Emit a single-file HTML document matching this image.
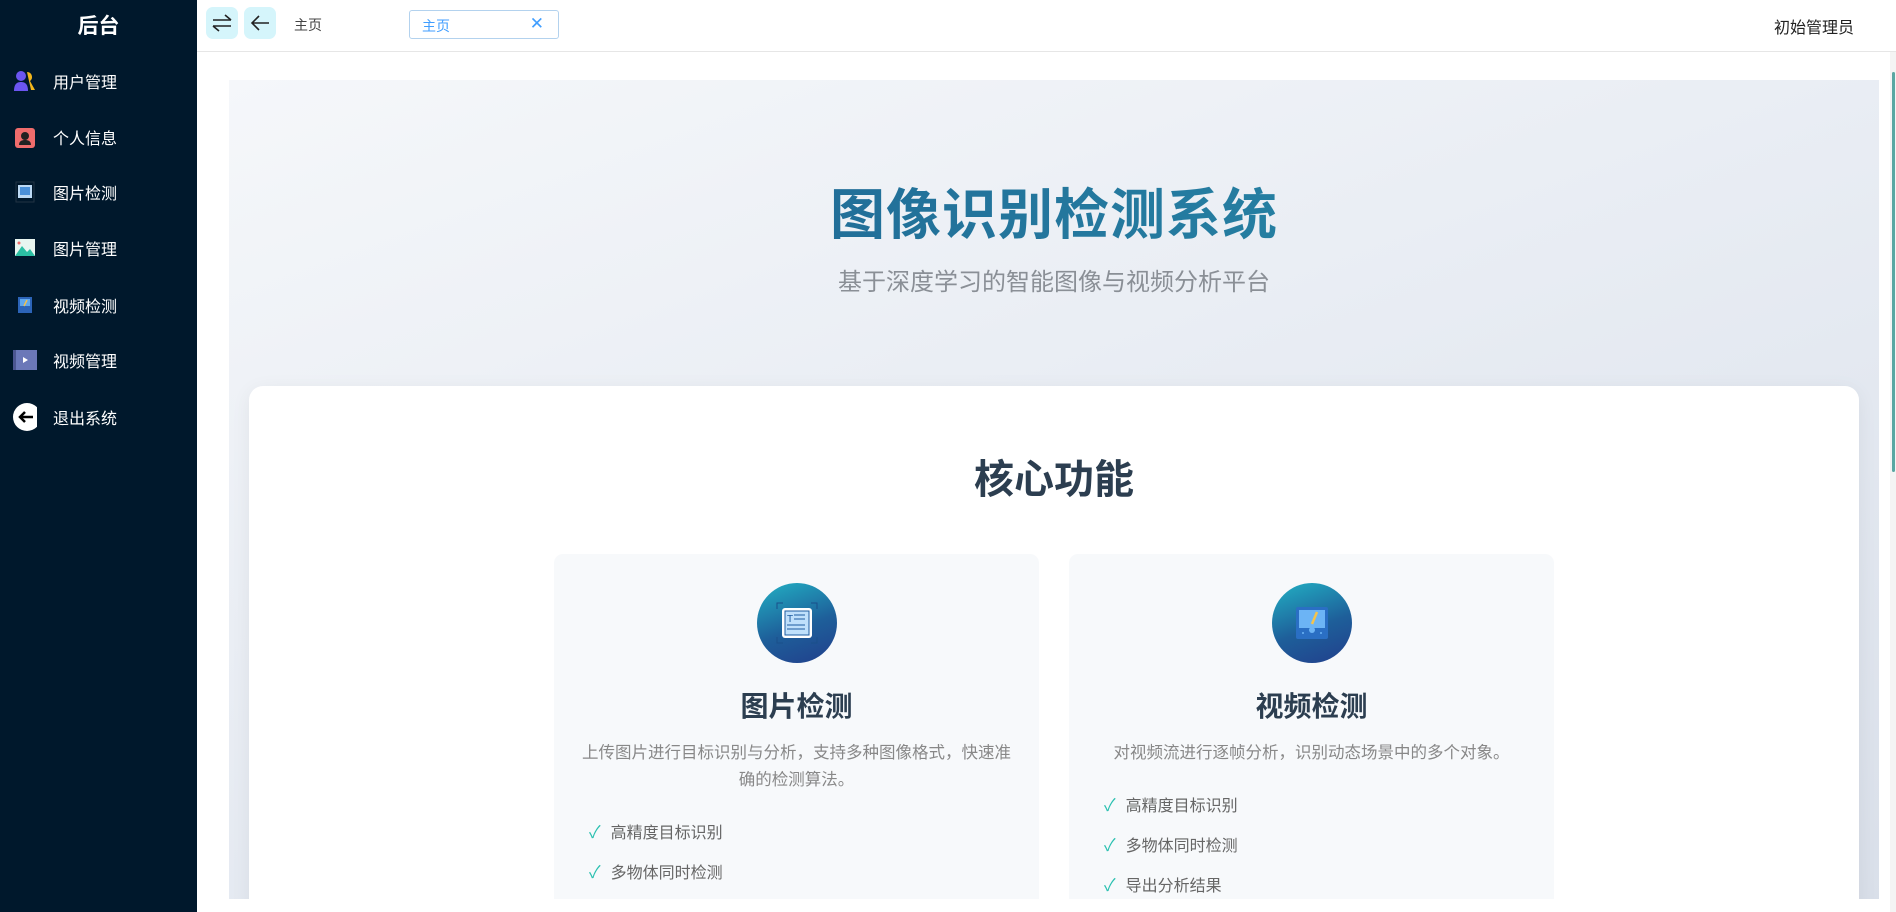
<!DOCTYPE html>
<html><head><meta charset="utf-8"><style>
*{margin:0;padding:0;box-sizing:border-box}
html,body{width:1896px;height:912px;overflow:hidden}
body{font-family:"Liberation Sans","Noto Sans CJK SC",sans-serif;background:#fff;position:relative}
#wrap{position:absolute;left:0;top:0;width:1896px;height:912px;overflow:hidden}
#main{position:absolute;left:0;top:0;width:1890px;height:899px;overflow:hidden}
.side{position:absolute;left:0;top:0;width:197px;height:912px;background:#00182c;color:#fff}
.side h1{position:absolute;top:10px;width:197px;text-align:center;font-size:21px;font-weight:bold}
.mi{position:absolute;left:0;width:197px;height:40px;display:flex;align-items:center;font-size:16px}
.mi .ic{width:24px;height:24px;margin-left:13px;margin-right:16px;display:flex;align-items:center;justify-content:center}
.hdr{position:absolute;left:197px;top:0;right:0;height:52px;border-bottom:1px solid #e6e6e6;background:#fff}
.btn{position:absolute;top:7px;width:32px;height:32px;background:#d5f5fb;border-radius:7px;display:flex;align-items:center;justify-content:center}
.tag{position:absolute;top:10px;width:150px;height:29px;border:1px solid #b3d2ee;border-radius:3px;color:#409eff;font-size:14px;padding:5px 12px}
.hero{position:absolute;left:229px;top:80px;width:1650px;height:832px;background:linear-gradient(160deg,#f5f7fa 0%,#e4e9f1 60%,#d9dfe9 100%)}
.ctr{position:absolute;left:229px;width:1650px;text-align:center}
.title{top:170px;font-size:55px;font-weight:bold;color:#1f6a94;background:linear-gradient(90deg,#1d5b8d,#2a92ad);-webkit-background-clip:text;background-clip:text;-webkit-text-fill-color:transparent;letter-spacing:1px}
.sub{top:262px;font-size:24px;color:#8a8f96}
.card{position:absolute;left:249px;top:386px;width:1610px;height:600px;background:#fff;border-radius:14px;box-shadow:0 4px 20px rgba(0,0,0,.06)}
.h2{top:447px;font-size:40px;font-weight:bold;color:#2c3e50}
.fc{position:absolute;top:554px;width:485px;height:400px;background:#f7f9fb;border-radius:9px;text-align:center}
.circ{width:80px;height:80px;border-radius:50%;margin:29px auto 0;background:linear-gradient(160deg,#22b1c4,#1e5f9a 55%,#213f8c);display:flex;align-items:center;justify-content:center}
.fc h3{font-size:28px;color:#2c3e50;margin-top:26px;line-height:36px}
.fc p{font-size:16.5px;color:#888;line-height:27px;margin:15px 22px 0}
.fc ul{list-style:none;text-align:left;margin:19px 0 0 35px}
.fc li{font-size:16px;color:#666;height:40px;line-height:40px}
.fc li b{color:#2bc0b0;font-weight:normal;margin-right:10px;font-size:17px}
.scroll{position:absolute;right:0;top:52px;width:6px;height:860px;background:#f4f4f4}
.scroll div{width:3px;height:400px;margin-left:2px;margin-top:20px;background:#5aa7a3;border-radius:2px}
</style></head><body><div id="wrap">
<div id="main">
<div class="hero"></div>
<div class="ctr title">图像识别检测系统</div>
<div class="ctr sub">基于深度学习的智能图像与视频分析平台</div>
<div class="card"></div>
<div class="ctr h2">核心功能</div>
<div class="fc" style="left:554px">
<div class="circ"><svg width="44" height="44"><path d="M2 8V2h6M36 2h6v6M2 36v6h6M42 36v6h-6" stroke="#1a4f8a" fill="none"/><rect x="7" y="7" width="30" height="30" rx="3" fill="#fff"/><rect x="10" y="10" width="24" height="24" fill="#bfe0fb" stroke="#1d5da0"/><text x="12" y="21" font-size="10" fill="#1d5da0" font-family="Liberation Sans">T</text><path d="M19 14h11M19 18h11M12 24h18M12 28h18" stroke="#1d5da0"/></svg></div>
<h3>图片检测</h3>
<p>上传图片进行目标识别与分析，支持多种图像格式，快速准确的检测算法。</p>
<ul><li><b>✓</b>高精度目标识别</li><li><b>✓</b>多物体同时检测</li><li><b>✓</b>导出分析结果</li></ul>
</div>
<div class="fc" style="left:1069px">
<div class="circ"><svg width="36" height="36"><rect x="2" y="2" width="32" height="32" rx="2" fill="#2a6fc4"/><rect x="5" y="5" width="26" height="18" fill="#6cb4f5"/><path d="M23 7l-5 12" stroke="#f4c44d" stroke-width="2.5"/><circle cx="18" cy="25" r="3" fill="#6cb4f5"/><circle cx="9" cy="28" r="1" fill="#6cb4f5"/><circle cx="27" cy="28" r="1" fill="#6cb4f5"/></svg></div>
<h3>视频检测</h3>
<p>对视频流进行逐帧分析，识别动态场景中的多个对象。</p>
<ul><li><b>✓</b>高精度目标识别</li><li><b>✓</b>多物体同时检测</li><li><b>✓</b>导出分析结果</li></ul>
</div>
</div>
<div class="side">
<h1>后台</h1>
<div class="mi" style="top:61px"><div class="ic"><svg width="24" height="22"><circle cx="8" cy="6" r="5" fill="#6b55f0"/><path d="M1 21c0-7 3-9 7-9s7 2 7 9z" fill="#6b55f0"/><path d="M14 2a5 5 0 0 1 3 9l5 9h-4z" fill="#f2b61c"/></svg></div>用户管理</div>
<div class="mi" style="top:117px"><div class="ic"><svg width="20" height="22"><rect x="0" y="2" width="20" height="20" rx="3" fill="#ef6c6c"/><circle cx="10" cy="10" r="4" fill="#222"/><path d="M4 19c0-4 3-5 6-5s6 1 6 5z" fill="#222"/></svg></div>个人信息</div>
<div class="mi" style="top:172px"><div class="ic"><svg width="20" height="22"><rect x="1" y="1" width="18" height="20" fill="none" stroke="#234" /><rect x="3" y="4" width="14" height="13" fill="#bcd9f4"/><rect x="5" y="6" width="10" height="8" fill="#4a90d9"/></svg></div>图片检测</div>
<div class="mi" style="top:228px"><div class="ic"><svg width="20" height="18"><rect width="20" height="17" fill="#e8f5f0"/><path d="M0 17 7 7l5 6 3-3 5 7z" fill="#2bbfa3"/><circle cx="4" cy="4" r="1.5" fill="#ef6c6c"/></svg></div>图片管理</div>
<div class="mi" style="top:285px"><div class="ic"><svg width="14" height="16"><rect width="14" height="16" fill="#2c64b8"/><rect x="2" y="2" width="10" height="7" fill="#5fa8ef"/><path d="M9 3 6 9" stroke="#f3c04a" stroke-width="1.5"/></svg></div>视频检测</div>
<div class="mi" style="top:340px"><div class="ic"><svg width="24" height="20"><rect width="24" height="20" fill="#6b78b8"/><rect x="0" width="3" height="20" fill="#4c5690"/><path d="M10 7v6l5-3z" fill="#fff"/></svg></div>视频管理</div>
<div class="mi" style="top:397px"><div class="ic"><svg width="28" height="28"><circle cx="14" cy="14" r="14" fill="#fff"/><path d="M20 14H7M12 9l-5 5 5 5" stroke="#000" stroke-width="2.5" fill="none"/></svg></div>退出系统</div>
</div>
<div class="hdr">
<div class="btn" style="left:9px"><svg width="22" height="18"><path d="M2 6h18M14 1l6 5M2 12h18M8 17l-6-5" stroke="#222" stroke-width="1.6" fill="none"/></svg></div>
<div class="btn" style="left:47px"><svg width="20" height="18"><path d="M19 9H2M9 2 2 9l7 7" stroke="#222" stroke-width="1.6" fill="none"/></svg></div>
<div style="position:absolute;left:97px;top:15px;font-size:14px;color:#444">主页</div>
<div class="tag" style="left:212px">主页<span style="position:absolute;right:14px;top:3px;font-size:17px">✕</span></div>
<div style="position:absolute;right:42px;top:14px;font-size:16px;color:#222">初始管理员</div>
</div>
<div class="scroll"><div></div></div>
</div></body></html>
